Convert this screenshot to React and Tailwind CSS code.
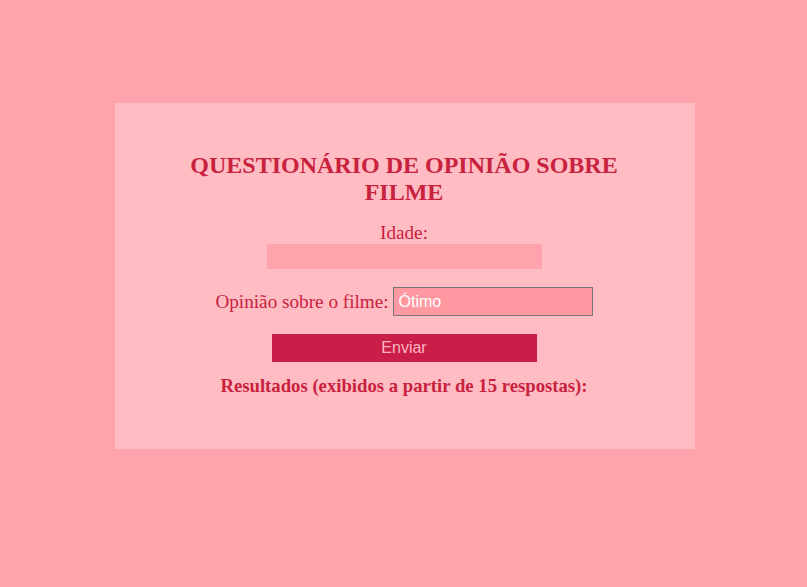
export default function App() {
  return (
    <div className="min-h-screen bg-[#ffa4ac] pt-[103px]" style={{ fontFamily: '"Liberation Serif", "Times New Roman", serif' }}>
      <div className="ml-[115px] w-[580px] h-[346px] bg-[#ffbcc2] flex flex-col items-center pt-[49px] pr-[2px] text-[#c8223f]">
        <h2 className="w-[460px] text-center text-[24px] font-bold leading-[27px]">
          QUESTIONÁRIO DE OPINIÃO SOBRE FILME
        </h2>
        <label className="mt-[15px] text-[19.2px] leading-[23px]">Idade:</label>
        <input className="w-[275px] h-[25px] bg-[#ffa4ac] outline-none" />
        <div className="mt-[18px] flex items-center gap-[4px]">
          <span className="text-[19.2px] leading-[23px]">Opinião sobre o filme:</span>
          <div
            className="w-[200px] h-[29px] bg-[#ff98a1] border border-[#767676] text-white text-[16px] px-[5px] flex items-center"
            style={{ fontFamily: '"Liberation Sans", Arial, sans-serif' }}
          >
            Ótimo
          </div>
        </div>
        <button
          className="mt-[18px] w-[265px] h-[28px] bg-[#ca1d48] text-[#ffb5c0] text-[16px]"
          style={{ fontFamily: '"Liberation Sans", Arial, sans-serif' }}
        >
          Enviar
        </button>
        <h3 className="mt-[13px] text-[18.72px] font-bold leading-[21px]">
          Resultados (exibidos a partir de 15 respostas):
        </h3>
      </div>
    </div>
  );
}
